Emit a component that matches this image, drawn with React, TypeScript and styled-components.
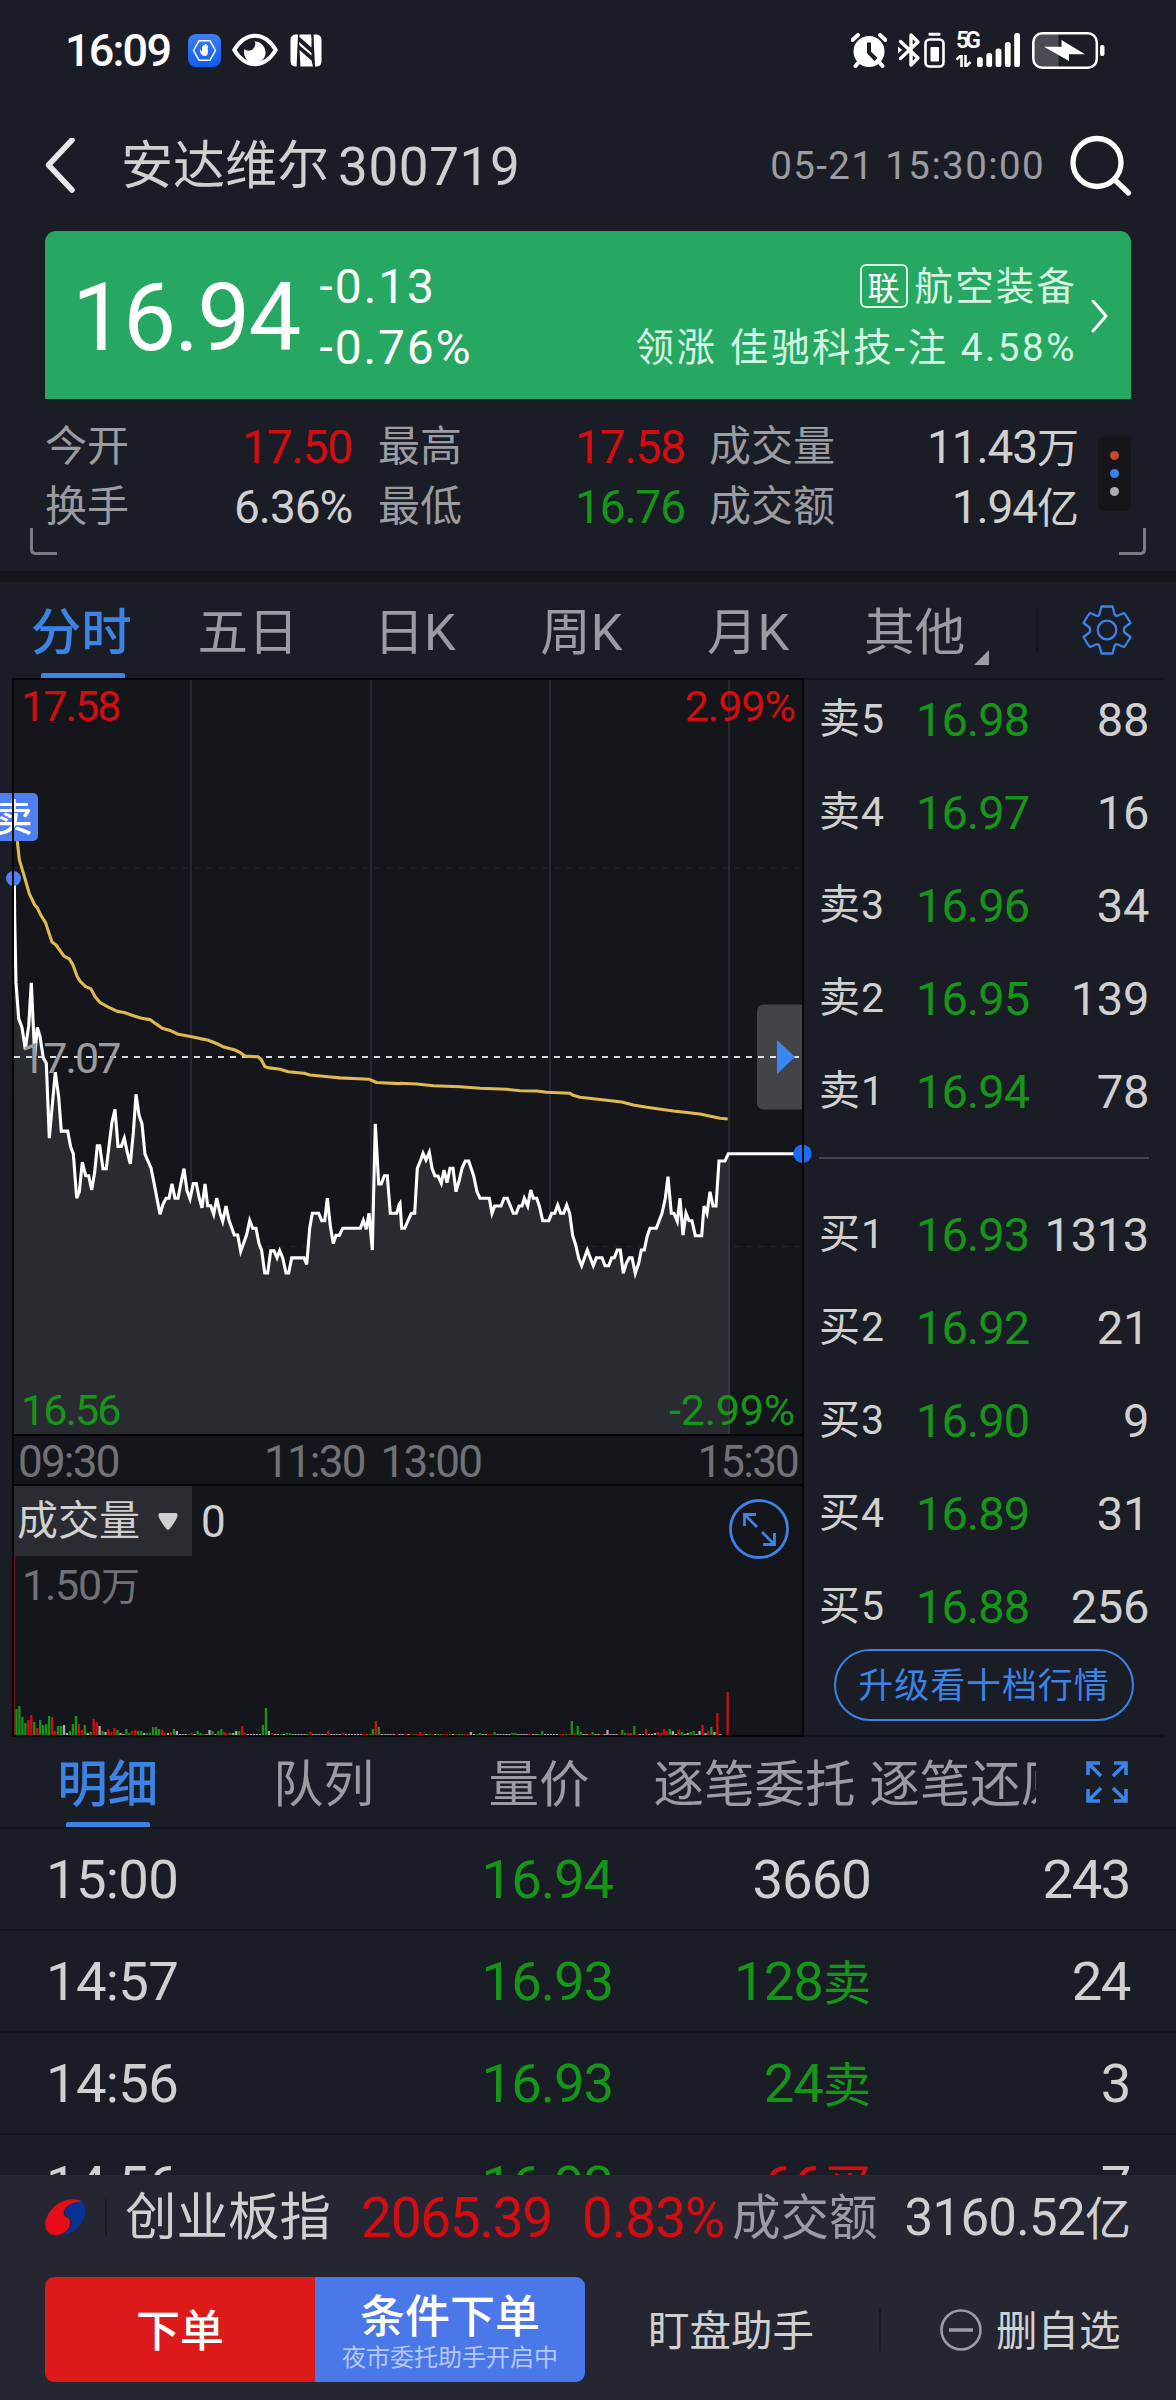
import React from "react";
import styled, { createGlobalStyle } from "styled-components";

const c = {
  page: "#1b1d26",
  panel: "#15161b",
  line: "#14151b",
  edge: "#050609",
  bottom: "#252632",
  text: "#d0d0d1",
  muted: "#9b9ca1",
  dim: "#717277",
  red: "#d50d10",
  green: "#159619",
  blue: "#3c83e6",
};

const Global = createGlobalStyle`
  body {
    margin: 0;
    background: ${c.page};
  }
  * { box-sizing: border-box; }
`;

const Screen = styled.main`
  width: 1176px;
  height: 2400px;
  display: flex;
  flex-direction: column;
  overflow: hidden;
  background: ${c.page};
  color: ${c.text};
  font-family: Roboto, "Noto Sans CJK SC", sans-serif;
  white-space: nowrap;
`;

const T = styled.span<{ $s: number; $c?: string; $ls?: number; $w?: number; $lh?: number }>`
  display: inline-block;
  padding-top: 0.05em;
  font-size: ${(p) => p.$s}px;
  color: ${(p) => p.$c ?? c.text};
  letter-spacing: ${(p) => p.$ls ?? 0}px;
  font-weight: ${(p) => p.$w ?? 400};
  line-height: ${(p) => (p.$lh ? p.$lh + "px" : "1.1")};
  white-space: pre;
`;
const Unit = styled.span<{ $s: number }>`
  font-size: ${(p) => p.$s}px;
  letter-spacing: 0;
  line-height: 1;
`;

/* ---------- status bar ---------- */

const StatusBar = styled.header`
  height: 100px;
  flex: none;
  display: flex;
  align-items: center;
  justify-content: space-between;
  padding: 0 71px 0 65px;
`;

const StatusGroup = styled.div`
  display: flex;
  align-items: center;
  svg { display: block; }
`;

const Gap = styled.i<{ $w: number }>`
  width: ${(p) => p.$w}px;
  flex: none;
`;

const HandBadge = () => (
  <svg width="33" height="33" viewBox="0 0 33 33">
    <defs>
      <linearGradient id="badge" x1="0" y1="0" x2="0" y2="1">
        <stop offset="0" stopColor="#3f7ff2" />
        <stop offset="1" stopColor="#0f5cf0" />
      </linearGradient>
    </defs>
    <rect width="33" height="33" rx="8" fill="url(#badge)" />
    <path d="M11 6.800h11l5.500 9.700-5.500 9.700H11l-5.500-9.700z" fill="none" stroke="#fff" strokeWidth="1.500" strokeLinejoin="round" />
    <path d="M12 15.500l2 2v-5h1.300v-1.500h1.500v-1h1.500v1.500h1.500v7c0 2-1 3.500-3 3.500-2.500 0-3.500-1.500-4.800-4z" fill="#fff" />
  </svg>
);

const EyeIcon = () => (
  <svg width="46" height="34" viewBox="0 0 46 34">
    <path d="M2.200 17C8 7.500 15 2.800 23 2.800S38 7.500 43.800 17C38 26.500 31 31.200 23 31.200S8 26.500 2.200 17z" fill="none" stroke="#fff" strokeWidth="4" strokeLinejoin="round" />
    <path d="M22.500 8.500a10.800 10.800 0 1 1-10 7.500c1.500 2 6 2.500 8.500 0s3-5.500 1.500-7.500z" fill="#fff" />
  </svg>
);

const NfcIcon = () => (
  <svg width="32" height="33" viewBox="0 0 32 33">
    <path d="M6 .5h2L6.600 32.500H5Q.500 32 .500 27V6Q.500.500 6 .500zM23.500.500h3q5 .500 5 5.500v21q0 5-4.500 5.500h-2z" fill="#fff" />
    <path d="M9.500.500h11.500l.500 4v9L9.500 3zM9 8l12.500 11v2.500L9.500 11.500zM9.500 16l12 10.500 1.500 6H10.500z" fill="#fff" />
  </svg>
);

const AlarmIcon = () => (
  <svg width="36" height="35" viewBox="0 0 36 35">
    <circle cx="18" cy="18.500" r="15.500" fill="#fff" />
    <path d="M1.500 7L7 2M34.500 7L29 2M7.500 29.500L4.500 33M28.500 29.500l3 3.500" stroke="#fff" strokeWidth="4" strokeLinecap="round" />
    <path d="M18 9.500v10l7 7" fill="none" stroke={c.page} strokeWidth="4" />
  </svg>
);

const BluetoothIcon = () => (
  <svg width="48" height="36" viewBox="0 0 48 36">
    <path d="M2.500 9.500L20 26l-7 7V3l7 7L2.500 26.500" fill="none" stroke="#fff" strokeWidth="3.400" strokeLinejoin="round" strokeLinecap="round" />
    <path d="M0 14.500l4 3.500-4 3.500z" fill="#fff" />
    <rect x="27.500" y="7.500" width="18" height="27" rx="4" fill="none" stroke="#fff" strokeWidth="2.600" />
    <rect x="30.500" y=".8" width="12" height="3" rx="1" fill="#fff" />
    <rect x="32.500" y="15" width="8.500" height="14.500" rx="1" fill="#fff" />
  </svg>
);

const SignalWrap = styled.div`
  display: flex;
  align-items: flex-end;
  height: 34px;
`;
const Network = styled.div`
  display: flex;
  flex-direction: column;
  width: 21px;
  height: 35px;
  justify-content: space-between;
`;
const NetName = styled.span`
  color: #fff;
  font-size: 23px;
  font-weight: 600;
  line-height: 18px;
  height: 18px;
  letter-spacing: -4px;
`;
const Signal = () => (
  <SignalWrap>
    <Network>
      <NetName>5G</NetName>
      <svg width="16" height="12" viewBox="0 0 16 12">
        <path d="M.500 4.500L5.500 0v12M9.500 0v12l5-5" fill="none" stroke="#fff" strokeWidth="2.600" />
      </svg>
    </Network>
    <svg width="43" height="34" viewBox="0 0 43 34">
      {[10, 14, 18.500, 25, 34].map((h, i) => (
        <rect key={h} x={i * 9.300} y={34 - h} width="5.800" height={h} rx="2.600" fill="#fff" />
      ))}
    </svg>
  </SignalWrap>
);

const BatteryIcon = () => (
  <svg width="73" height="37" viewBox="0 0 73 37">
    <path d="M10 2h16.500v33H10q-8 0-8-8V10q0-8 8-8z" fill="#4a4c54" />
    <rect x="1.300" y="1.300" width="63.500" height="34.400" rx="9" fill="none" stroke="#fff" strokeWidth="2.500" />
    <rect x="68" y="13" width="4.500" height="11" rx="2" fill="#fff" />
    <path d="M12 14.700h17.500V8L53 22.300H37V29z" fill="#fff" />
  </svg>
);

/* ---------- title bar ---------- */

const TitleBar = styled.div`
  height: 131px;
  flex: none;
  display: flex;
  align-items: center;
  padding: 0 43px 0 45px;
`;
const Spacer = styled.i`
  flex: 1;
`;

/* ---------- price card ---------- */

const PriceCard = styled.section`
  height: 168px;
  flex: none;
  margin: 0 45px;
  padding: 3px 22px 0 27px;
  border-radius: 11px 11px 0 0;
  background: #27a862;
  display: flex;
  align-items: center;
`;
const Stack = styled.div<{ $end?: boolean }>`
  display: flex;
  flex-direction: column;
  align-items: ${(p) => (p.$end ? "flex-end" : "flex-start")};
`;
const CardLine = styled.div`
  height: 61px;
  display: flex;
  align-items: center;
`;
const LinkTag = styled.span`
  width: 48px;
  height: 44px;
  border: 2px solid #d9f5e4;
  border-radius: 6px;
  margin-right: 7px;
  display: flex;
  align-items: center;
  justify-content: center;
  font-size: 32px;
  color: #fff;
`;

/* ---------- key figures ---------- */

const Figures = styled.section`
  height: 172px;
  flex: none;
  position: relative;
  padding: 17px 45px 0;
  display: flex;
`;
const FigureColumn = styled.div<{ $w: number; $mr: number }>`
  width: ${(p) => p.$w}px;
  margin-right: ${(p) => p.$mr}px;
`;
const FigureRow = styled.div`
  height: 60px;
  display: flex;
  align-items: center;
  justify-content: space-between;
`;
const MoreDots = styled.div`
  width: 33px;
  height: 75px;
  margin-top: 20px;
  border-radius: 7px;
  background: #15161a;
  display: flex;
  flex-direction: column;
  align-items: center;
  justify-content: center;
  gap: 9px;
`;
const Dot = styled.i<{ $c: string }>`
  width: 9px;
  height: 9px;
  border-radius: 50%;
  background: ${(p) => p.$c};
`;
const Corner = styled.i<{ $right?: boolean }>`
  position: absolute;
  bottom: 16px;
  ${(p) => (p.$right ? "right: 30px; border-right" : "left: 30px; border-left")}: 3px solid #7b7c80;
  border-bottom: 3px solid #7b7c80;
  border-${(p) => (p.$right ? "bottom-right" : "bottom-left")}-radius: 5px;
  width: 27px;
  height: 27px;
`;
const Band = styled.div`
  height: 11px;
  flex: none;
  background: ${c.panel};
`;

/* ---------- period tabs ---------- */

const PeriodTabs = styled.nav`
  height: 96px;
  flex: none;
  display: flex;
`;
const PeriodTab = styled.div`
  width: 166.700px;
  padding-right: 4px;
  display: flex;
  justify-content: center;
  position: relative;
`;
const TabUnderline = styled.i`
  position: absolute;
  bottom: 0;
  left: 50%;
  width: 84px;
  margin-left: -42px;
  height: 5px;
  border-radius: 2px 2px 0 0;
  background: ${c.blue};
`;
const MoreCorner = styled.i`
  position: absolute;
  right: 11px;
  bottom: 13px;
  border-left: 15px solid transparent;
  border-bottom: 15px solid ${c.muted};
`;
const TabDivider = styled.i`
  width: 2px;
  height: 45px;
  margin: 25px 0 0 36px;
  background: ${c.line};
`;
const GearSlot = styled.div`
  width: 50px;
  margin: 23px 0 0 44px;
`;

/* ---------- market area ---------- */

const Market = styled.section`
  height: 1059px;
  flex: none;
  display: flex;
`;
const Charts = styled.div`
  width: 804px;
  flex: none;
`;
const PricePane = styled.div`
  height: 758px;
  position: relative;
  svg { display: block; overflow: visible; }
`;
const PaneLabels = styled.div`
  position: absolute;
  inset: 3px 9px 2px 21px;
  display: flex;
  flex-direction: column;
  justify-content: space-between;
`;
const LabelRow = styled.div`
  display: flex;
  justify-content: space-between;
`;
const TimeAxis = styled.div`
  height: 48px;
  margin-left: 12px;
  padding: 0 4px 0 4px;
  background: ${c.panel};
  border: solid ${c.edge};
  border-width: 0 2px;
  display: grid;
  grid-template-columns: 246px 1fr auto;
  align-items: center;
`;
const MidTimes = styled.div`
  display: flex;
  gap: 16px;
`;
const VolumePane = styled.div`
  height: 253px;
  margin-left: 12px;
  border: 2px solid ${c.edge};
  background: ${c.panel};
  display: flex;
  flex-direction: column;
`;
const VolumeHead = styled.div`
  display: flex;
  height: 70px;
  align-items: center;
`;
const VolumePicker = styled.div`
  width: 178px;
  height: 70px;
  padding-left: 3px;
  background: #2b2c31;
  display: flex;
  align-items: center;
  gap: 18px;
  margin-right: 9px;
`;
const ExpandSlot = styled.div`
  margin: 15px 13px 0 auto;
  height: 60px;
`;
const VolumeScale = styled.div`
  height: 59px;
  padding: 4px 0 0 8px;
`;

/* ---------- order book ---------- */

const Book = styled.div`
  width: 360px;
  border: solid ${c.line};
  border-width: 2px 0;
  padding: 0 15px;
`;
const BookRow = styled.div`
  height: 93px;
  display: grid;
  grid-template-columns: 97px 118px 1fr;
  align-items: center;
`;
const Sells = styled.div`
  margin-top: -8px;
`;
const Quantity = styled.div`
  display: flex;
  justify-content: flex-end;
`;
const BookDivider = styled.div`
  height: 2px;
  background: #44454d;
  margin: 20px 0 28px;
`;
const Upgrade = styled.div`
  width: 300px;
  height: 72px;
  margin: -3px 0 0 15px;
  padding-top: 2px;
  border: 2px solid ${c.blue};
  border-radius: 36px;
  display: flex;
  align-items: center;
  justify-content: center;
`;

/* ---------- trade list ---------- */

const DetailTabs = styled.nav`
  height: 92px;
  flex: none;
  display: flex;
  border-bottom: 2px solid ${c.line};
`;
const DetailScroller = styled.div`
  width: 1036px;
  flex: none;
  overflow: hidden;
  display: flex;
`;
const DetailTab = styled.div`
  width: 215.600px;
  flex: none;
  display: flex;
  justify-content: center;
  position: relative;
`;
const FullscreenSlot = styled.div`
  margin: 24px 0 0 50px;
`;
const Trades = styled.section`
  height: 346px;
  flex: none;
  overflow: hidden;
`;
const TradeRow = styled.div`
  height: 102px;
  padding: 0 46px 0 46px;
  border-bottom: 2px solid ${c.line};
  display: grid;
  grid-template-columns: 200px 367px 258px 1fr;
  align-items: center;
  text-align: right;
  > :first-child { text-align: left; }
`;

/* ---------- bottom dock ---------- */

const Dock = styled.footer`
  flex: 1;
  background: ${c.bottom};
`;
const IndexRow = styled.div`
  height: 84px;
  display: flex;
  align-items: center;
  padding: 0 45px 0 43px;
`;
const Rule = styled.i<{ $h: number; $ml: number; $mr: number }>`
  width: 2px;
  height: ${(p) => p.$h}px;
  margin: 0 ${(p) => p.$mr}px 0 ${(p) => p.$ml}px;
  background: #1a1b22;
`;
const Actions = styled.div`
  height: 105px;
  margin: 18px 45px 0;
  display: flex;
  align-items: center;
`;
const ActionButton = styled.div<{ $bg: string; $side: "left" | "right"; $pt: number }>`
  width: 270px;
  height: 105px;
  flex: none;
  padding-top: ${(p) => p.$pt}px;
  background: ${(p) => p.$bg};
  border-radius: ${(p) => (p.$side === "left" ? "9px 0 0 9px" : "0 9px 9px 0")};
  display: flex;
  flex-direction: column;
  align-items: center;
  justify-content: center;
`;
const ActionText = styled.div`
  padding-top: 3px;
`;

/* ---------- chart data ---------- */

/* Price samples on a fine grid: morning x/3, y/2.8 from y=740; afternoon x/3 from x=400, y/3 from y=1000. */
type P = [number, number];
const am = (s: string): P[] => s.split(" ").map((q) => { const [x, y] = q.split(",").map(Number); return [x / 3, 740 + y / 2.8]; });
const pm = (s: string): P[] => s.split(" ").map((q) => { const [x, y] = q.split(",").map(Number); return [400 + x / 3, 1000 + y / 3]; });
const join = (pts: P[]) => pts.map(([x, y]) => `${x.toFixed(1)},${y.toFixed(1)}`).join(" ");

const price = [
  ...am("43,388 44,500 48,680 56,780 66,805 76,866 86,800 94,680 104,885 112,805 120,830 130,890 139,905 148,1115 158,1010 166,930 176,1000 184,1095 203,1095 212,1140 220,1158 230,1283 238,1265 247,1182 257,1220 266,1220 275,1260 284,1210 292,1136 299,1136 309,1200 319,1200 328,1130 336,1070 345,1034 354,1138 364,1138 373,1115 382,1155 391,1187 400,1100 408,992 417,1050 426,1075 435,1160 453,1198 462,1240 480,1328 489,1300 498,1283 507,1283 516,1243 525,1283 534,1283 543,1240 552,1200 561,1262 570,1285 580,1242 589,1242 598,1283 606,1310 615,1243 623,1304 632,1304 641,1328 650,1283 660,1325 668,1348 678,1305 687,1345 703,1386 713,1386 722,1432 740,1385 749,1345 758,1367 768,1367 777,1410 785,1430 794,1492 803,1492 812,1430 822,1430 831,1450 839,1430 848,1450 858,1492 866,1492 875,1450 912,1450 920,1468 929,1367 937,1325 956,1325 965,1346 974,1346 982,1283 991,1360 1000,1410 1008,1387 1018,1387 1028,1367 1081,1367 1090,1345 1099,1370 1107,1325 1117,1428 1126,1075 1136,1243 1144,1243 1153,1220 1162,1220 1171,1325 1190,1325 1198,1300"),
  ...pm("0,610 5,685 14,685 34,640 44,640 52,505 62,480 69,460 78,480 88,457 96,505 105,528 114,528 124,550 132,510 141,548 150,505 159,505 168,575 178,540 186,505 196,483 206,483 221,528 231,575 240,595 268,595 276,640 284,618 303,618 312,595 322,595 340,640 349,640 357,618 366,618 373,595 383,618 392,570 400,595 410,595 418,618 428,662 446,662 455,640 464,640 473,615 482,640 491,640 500,615 509,640 518,707 527,735 536,775 545,797 562,750 580,797 589,773 606,773 615,797 626,797 635,773 643,773 652,750 661,750 670,820 679,790 688,773 696,773 706,820 716,790 724,750 733,750 742,707 750,685 769,685 786,640 796,595 804,530 814,640 822,640 832,664 840,595 849,705 858,640 867,662 876,662 886,707 905,707 912,618 921,640 930,575 939,618 948,618 957,483 975,483 985,461"),
];
const average = [
  ...am("52,283 58,335 75,388 88,430 104,462 112,470 122,490 137,512 145,535 156,566 168,574 192,605 208,613 218,628 232,663 240,675 256,690 273,697 285,718 300,735 325,748 352,760 373,763 400,772 425,779 450,783 468,795 487,807 510,813 535,824 575,831 600,836 623,840 655,852 672,860 705,868 722,876 735,885 775,887 783,894 795,915 808,918 840,922 865,929 912,933 930,938 985,943 1020,946 1108,950 1130,959 1198,962"),
  ...pm("0,250 50,252 100,257 180,260 240,265 320,268 360,272 410,273 440,277 510,280 520,286 540,292 620,301 665,306 700,315 740,322 820,333 900,342 960,355 983,357"),
];

/* One token per minute: colour letter followed by bar height in px. */
const volumes =
  "g26 g29 g18 g12 r15 r20 g13 r7 g15 g10 g11 g19 r18 r4 g9 g9 w10 w2 g4 g11 g19 r11 r5 g10 w2 g3 r16 r13 w9 g4 w3 r6 r3 r7 g5 w2 w1 g6 g2 r4 r5 g4 g4 w2 g2 g2 g8 g8 g6 r5 r2 w2 r3 g6 w4 w1 w1 w1 g1 r2 w1 g4 g2 g1 w1 w5 g4 w1 g4 g6 r3 r2 g2 w2 w4 g4 r9 r2 w1 w1 w1 w1 w1 g10 g27 w4 r2 w1 w1 g1 w1 g2 g2 w1 w1 w1 w1 w1 g1 r3 w1 w1 w1 w1 w1 r4 w1 w1 w1 w1 r2 w1 w1 w1 w1 w1 w1 r1 r1 g1 g6 r14 g8 w1 w1 w1 w1 w1 r1 w1 w1 r1 w1 r1 g1 r1 r3 r1 w1 g1 r1 w1 g1 g1 r1 r1 g1 w1 r1 g1 g1 r1 r1 w3 w1 g1 g2 w1 w1 r1 r1 g3 w1 w1 w1 w1 w1 g2 g2 w1 w1 w1 w1 r1 w1 w1 g1 g4 w1 w1 w1 w1 w1 r1 r1 g1 r1 g14 r2 g9 g3 w1 w1 r1 g3 w1 w1 r1 w1 w5 w1 w1 w1 r1 g5 g2 r2 r2 g9 r1 w1 w1 r6 w1 w1 w2 r3 r2 r6 r4 g6 w4 w1 r5 g3 w1 w2 g3 g4 w1 w4 r10 w2 r4 g8 w3 r22 w1".split(" ");
const volumeColor: Record<string, string> = { g: "#189219", r: "#cd0f11", w: "#a9a9ac" };

const PriceChart = () => (
  <svg width="804" height="758" viewBox="0 678 804 758">
    <rect x="13" y="679" width="790" height="756" fill={c.panel} />
    <path d="M14 868H802M14 1246.500H802" stroke="#222329" strokeWidth="1.500" strokeDasharray="6 6" />
    <path d="M191 680V1434M371 680V1434M550 680V1434M729 680V1434" stroke="#31323e" strokeWidth="1.400" />
    <polygon points={`14,1434 ${join(price)} 728.500,1434`} fill="#2a2b30" />
    <path d="M729 1153V1434" stroke="#3a3b47" strokeWidth="1.400" />
    <path d="M14 1057H799" stroke="#dadadc" strokeWidth="2" strokeDasharray="6 6" />
    <polyline points={join(average)} fill="none" stroke="#e0ba50" strokeWidth="3.100" strokeLinejoin="round" />
    <polyline points={`${join(price)} 802,1153.700`} fill="none" stroke="#fff" strokeWidth="3.100" />
    <rect x="-10" y="793" width="48" height="48" rx="5" fill="#4f80f3" />
    <text x="-5.500" y="830.500" fontSize="38" fontWeight="500" fill="#fff">卖</text>
    <circle cx="13.500" cy="878.500" r="7.500" fill="#4f80f3" />
    <circle cx="802.500" cy="1153.700" r="9.200" fill="#1b6df5" />
    <path d="M803 1004.500h-39q-7 0-7 7v91q0 7 7 7h39z" fill="#fff" fillOpacity=".2" />
    <path d="M777 1040L795 1057L777 1074z" fill="#3c86f2" />
    <path d="M13 678V1436M803 678V1436M12 679H804M12 1435H804" stroke={c.edge} strokeWidth="2" />
  </svg>
);

const VolumeBars = () => (
  <svg width="788" height="249" viewBox="14 1486 788 249">
    {volumes.map((v, i) => {
      const h = Number(v.slice(1));
      return <rect key={i} x={15.300 + i * 2.970} y={1735 - h} width="2.300" height={h} fill={volumeColor[v[0]]} />;
    })}
    <rect x="726.500" y="1692" width="2.300" height="43" fill="#c31214" />
    <path d="M14.600 1556V1735" stroke="#7a1519" strokeWidth="1.200" />
  </svg>
);
const BarsLayer = styled.div`
  height: 0;
  align-self: flex-start;
  svg {
    display: block;
    margin-top: -129px;
  }
`;

const GearIcon = () => (
  <svg width="50" height="50" viewBox="-25 -25 50 50" fill="none" stroke={c.blue} strokeWidth="2.300" strokeLinejoin="round">
    <path d="M-5.500-23.500H5.500L7.500-16Q8.500-13.500 11-14.500L17-17Q18-16.500 23.500-7L17.500-2.500Q16.300 0 17.500 2.500L23.500 7Q18 16.500 17 17L11 14.500Q8.500 13.500 7.500 16L5.500 23.500H-5.500L-7.500 16Q-8.500 13.500-11 14.500L-17 17Q-18 16.500-23.500 7L-17.500 2.500Q-16.300 0-17.500-2.500L-23.500-7Q-18-16.500-17-17L-11-14.500Q-8.500-13.500-7.500-16z" />
    <circle r="9.300" />
  </svg>
);

const periods = ["分时", "五日", "日K", "周K", "月K", "其他"];
const details = ["明细", "队列", "量价", "逐笔委托", "逐笔还原"];
const sells = [["卖5", "16.98", "88"], ["卖4", "16.97", "16"], ["卖3", "16.96", "34"], ["卖2", "16.95", "139"], ["卖1", "16.94", "78"]];
const buys = [["买1", "16.93", "1313"], ["买2", "16.92", "21"], ["买3", "16.90", "9"], ["买4", "16.89", "31"], ["买5", "16.88", "256"]];
const trades = [
  ["15:00", "16.94", "3660", "", "243"],
  ["14:57", "16.93", "128", "卖", "24"],
  ["14:56", "16.93", "24", "卖", "3"],
  ["14:56", "16.93", "66", "买", "7"],
];

const figures = [
  { w: 307, mr: 26, rows: [["今开", "17.50", c.red], ["换手", "6.36%", c.text]] },
  { w: 307, mr: 24, rows: [["最高", "17.58", c.red], ["最低", "16.76", c.green]] },
  { w: 370, mr: 19, rows: [["成交量", "11.43万", c.text], ["成交额", "1.94亿", c.text]] },
];

/* Digits and the Chinese unit that follows them are sized separately. */
const Amount = ({ value, s, color, ls, unit }: { value: string; s: number; color: string; ls: number; unit: number }) => {
  const m = value.match(/^([\d.%:-]+)(.*)$/)!;
  return (
    <T $s={s} $c={color} $ls={ls}>
      {m[1]}
      {m[2] && <Unit $s={unit}>{m[2]}</Unit>}
    </T>
  );
};

const BookRows = ({ rows }: { rows: string[][] }) => (
  <>
    {rows.map(([name, p, q]) => (
      <BookRow key={name}>
        <T $s={41} $ls={1}>{name}</T>
        <T $s={47} $c={c.green} $ls={-1}>{p}</T>
        <Quantity><T $s={47} $ls={-0.300}>{q}</T></Quantity>
      </BookRow>
    ))}
  </>
);

export default function App() {
  return (
    <Screen>
      <Global />
      <StatusBar>
        <StatusGroup>
          <T $s={45} $c="#fff" $w={500} $ls={-1.800}>16:09</T>
          <Gap $w={18} />
          <HandBadge />
          <Gap $w={11} />
          <EyeIcon />
          <Gap $w={12} />
          <NfcIcon />
        </StatusGroup>
        <StatusGroup>
          <AlarmIcon />
          <Gap $w={11} />
          <BluetoothIcon />
          <Gap $w={10} />
          <Signal />
          <Gap $w={12} />
          <BatteryIcon />
        </StatusGroup>
      </StatusBar>

      <TitleBar>
        <svg width="30" height="56" viewBox="0 0 30 56">
          <path d="M27 2L3.500 27L27 52" fill="none" stroke="#e8e8ea" strokeWidth="5.500" strokeLinecap="round" strokeLinejoin="round" />
        </svg>
        <Gap $w={46} />
        <T $s={52}>安达维尔</T>
        <Gap $w={9} />
        <T $s={53} $ls={0.600}>300719</T>
        <Spacer />
        <T $s={38.500} $c={c.muted} $ls={1.400}>05-21 15:30:00</T>
        <Gap $w={23} />
        <svg width="65" height="64" viewBox="0 0 65 64">
          <circle cx="29" cy="28.500" r="24" fill="none" stroke="#fff" strokeWidth="5.300" />
          <path d="M47.500 46.500L60.500 59" stroke="#fff" strokeWidth="5.300" strokeLinecap="round" />
        </svg>
      </TitleBar>

      <PriceCard>
        <T $s={94} $c="#fff" $ls={-1.700}>16.94</T>
        <Gap $w={20} />
        <Stack>
          <CardLine><T $s={48} $c="#fff" $ls={1.900}>-0.13</T></CardLine>
          <CardLine><T $s={48} $c="#fff" $ls={1.800}>-0.76%</T></CardLine>
        </Stack>
        <Spacer />
        <Stack $end>
          <CardLine>
            <LinkTag>联</LinkTag>
            <T $s={38.500} $c="#d5f5e2" $ls={2.100}>航空装备</T>
          </CardLine>
          <CardLine><T $s={38.500} $c="#d5f5e2" $ls={2.600}>领涨 佳驰科技-注 4.58%</T></CardLine>
        </Stack>
        <Gap $w={14} />
        <svg width="18" height="34" viewBox="0 0 18 34">
          <path d="M2 1L15 16L2 31" fill="none" stroke="#fff" strokeWidth="3" strokeLinecap="round" strokeLinejoin="round" />
        </svg>
      </PriceCard>

      <Figures>
        {figures.map((f, i) => (
          <FigureColumn key={i} $w={f.w} $mr={f.mr}>
            {f.rows.map(([label, value, color]) => (
              <FigureRow key={label}>
                <T $s={42} $c={c.muted}>{label}</T>
                <Amount value={value} s={46} color={color} ls={-1.100} unit={42} />
              </FigureRow>
            ))}
          </FigureColumn>
        ))}
        <MoreDots>
          <Dot $c="#c8452f" />
          <Dot $c="#3c82ea" />
          <Dot $c="#aaaab0" />
        </MoreDots>
        <Corner />
        <Corner $right />
      </Figures>
      <Band />

      <PeriodTabs>
        {periods.map((p, i) => (
          <PeriodTab key={p}>
            <T $s={50.500} $c={i ? c.muted : c.blue} $w={i ? 400 : 500} $lh={96}>{p}</T>
            {i === 0 && <TabUnderline />}
            {i === 5 && <MoreCorner />}
          </PeriodTab>
        ))}
        <TabDivider />
        <GearSlot><GearIcon /></GearSlot>
      </PeriodTabs>

      <Market>
        <Charts>
          <PricePane>
            <PriceChart />
            <PaneLabels>
              <LabelRow>
                <T $s={43} $c={c.red} $ls={-1.900}>17.58</T>
                <T $s={43} $c={c.red} $ls={-1}>2.99%</T>
              </LabelRow>
              <T $s={43} $c="#9b9b9e" $ls={-1.900}>17.07</T>
              <LabelRow>
                <T $s={43} $c={c.green} $ls={-1.900}>16.56</T>
                <T $s={43} $c={c.green} $ls={-0.200}>-2.99%</T>
              </LabelRow>
            </PaneLabels>
          </PricePane>
          <TimeAxis>
            <T $s={44} $c={c.dim} $ls={-1.800}>09:30</T>
            <MidTimes>
              <T $s={44} $c={c.dim} $ls={-1.800}>11:30</T>
              <T $s={44} $c={c.dim} $ls={-1.800}>13:00</T>
            </MidTimes>
            <T $s={44} $c={c.dim} $ls={-1.800}>15:30</T>
          </TimeAxis>
          <VolumePane>
            <VolumeHead>
              <VolumePicker>
                <T $s={41}>成交量</T>
                <svg width="20" height="17" viewBox="0 0 20 17">
                  <path d="M2.500 0h15q2.500 0 2 3-1 4-7.500 12.500-2 2.500-4 0Q1.500 7 .500 3 0 0 2.500 0z" fill={c.text} />
                </svg>
              </VolumePicker>
              <T $s={44}>0</T>
              <ExpandSlot>
                <svg width="60" height="60" viewBox="0 0 60 60" fill="none" stroke={c.blue} strokeWidth="2.800">
                  <circle cx="30" cy="30" r="28.500" />
                  <path d="M15.500 27V15.500H27M16 16l12 12M45.500 34V45.500H34M45 45L33 33" />
                </svg>
              </ExpandSlot>
            </VolumeHead>
            <VolumeScale>
              <Amount value="1.50万" s={43} color={c.dim} ls={-1.200} unit={39} />
            </VolumeScale>
            <BarsLayer><VolumeBars /></BarsLayer>
          </VolumePane>
        </Charts>
        <Book>
          <Sells><BookRows rows={sells} /></Sells>
          <BookDivider />
          <BookRows rows={buys} />
          <Upgrade><T $s={35} $c={c.blue} $ls={0.900}>升级看十档行情</T></Upgrade>
        </Book>
      </Market>

      <DetailTabs>
        <DetailScroller>
          {details.map((d, i) => (
            <DetailTab key={d}>
              <T $s={50.500} $c={i ? c.muted : c.blue} $w={i ? 400 : 500} $lh={90}>{d}</T>
              {i === 0 && <TabUnderline />}
            </DetailTab>
          ))}
        </DetailScroller>
        <FullscreenSlot>
          <svg width="42" height="42" viewBox="0 0 42 42" fill="none" stroke={c.blue} strokeWidth="3.600">
            <path d="M2 14V2h12M2 2l13 13M28 2h12v12M40 2L27 15M2 28v12h12M2 40l13-13M40 28v12H28M40 40L27 27" />
          </svg>
        </FullscreenSlot>
      </DetailTabs>
      <Trades>
        {trades.map(([time, p, size, side, n], i) => {
          const tone = side === "卖" ? c.green : side === "买" ? c.red : c.text;
          return (
            <TradeRow key={i}>
              <T $s={54.500} $ls={-0.700}>{time}</T>
              <T $s={54.500} $c={c.green} $ls={-1.100}>{p}</T>
              <Amount value={size + side} s={54.500} color={tone} ls={-1} unit={48} />
              <T $s={54.500} $ls={-1.500}>{n}</T>
            </TradeRow>
          );
        })}
      </Trades>

      <Dock>
        <IndexRow>
          <svg width="44" height="40" viewBox="0 0 44 40">
            <path d="M40 5C32 0 18 2 9 12C-2 24 1 39 14 38C23 37 28 30 27 24C26 19 19 21 21 14C23 8 32 4 40 5z" fill="#e60d18" />
            <path d="M40 5C32 4 24 8 22 13C20 19 28 19 29 24C30 31 24 35 20 38C36 36 48 18 40 5z" fill="#0a3290" />
          </svg>
          <Rule $h={36} $ml={18} $mr={18} />
          <T $s={51.500}>创业板指</T>
          <Gap $w={30} />
          <T $s={55} $c={c.red} $ls={-1.300}>2065.39</T>
          <Gap $w={30} />
          <T $s={55} $c={c.red} $ls={-1}>0.83%</T>
          <Spacer />
          <T $s={48.500} $c={c.muted}>成交额</T>
          <Gap $w={27} />
          <Amount value="3160.52亿" s={51} color={c.text} ls={-0.700} unit={46} />
        </IndexRow>
        <Actions>
          <ActionButton $bg="#dc1a1a" $side="left" $pt={4}><T $s={44} $c="#fff" $w={500}>下单</T></ActionButton>
          <ActionButton $bg="#4b78e8" $side="right" $pt={9}>
            <T $s={45} $c="#fff" $w={500} $lh={44}>条件下单</T>
            <T $s={24} $c="#b3c7f7" $lh={34}>夜市委托助手开启中</T>
          </ActionButton>
          <Gap $w={63} />
          <ActionText><T $s={41.500}>盯盘助手</T></ActionText>
          <Rule $h={42} $ml={65} $mr={59} />
          <svg width="42" height="42" viewBox="0 0 42 42" fill="none" stroke="#9c9da3" strokeWidth="2.600">
            <circle cx="21" cy="21" r="19.500" />
            <path d="M9 21h24" strokeWidth="3.500" />
          </svg>
          <Gap $w={14} />
          <ActionText><T $s={41.500}>删自选</T></ActionText>
        </Actions>
      </Dock>
    </Screen>
  );
}
